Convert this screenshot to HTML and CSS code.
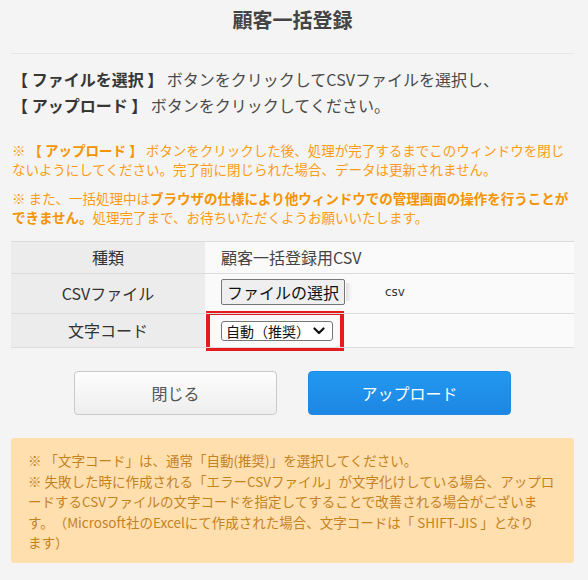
FILE: index.html
```html
<!DOCTYPE html>
<html lang="ja">
<head>
<meta charset="utf-8">
<title>顧客一括登録</title>
<link rel="stylesheet" href="styles.css">
</head>
<body>
<h1 class="title">顧客一括登録</h1>
<p class="lead"><b>【 ファイルを選択 】</b> ボタンをクリックしてCSVファイルを選択し、<br><b>【 アップロード 】</b> ボタンをクリックしてください。</p>
<div class="notes">
  <p class="note">※ <b>【 アップロード 】</b> ボタンをクリックした後、処理が完了するまでこのウィンドウを閉じないようにしてください。完了前に閉じられた場合、データは更新されません。</p>
  <p class="note">※ また、一括処理中は<b>ブラウザの仕様により他ウィンドウでの管理画面の操作を行うことができません。</b>処理完了まで、お待ちいただくようお願いいたします。</p>
</div>
<table class="form">
  <tr class="row-type">
    <th>種類</th>
    <td>顧客一括登録用CSV</td>
  </tr>
  <tr class="row-file">
    <th>CSVファイル</th>
    <td>
      <div class="file">
        <button class="file-btn" type="button">ファイルの選択</button>
        <span class="file-fade"></span>
        <span class="file-ext">csv</span>
      </div>
    </td>
  </tr>
  <tr class="row-code">
    <th>文字コード</th>
    <td class="code-cell">
      <div class="highlight">
        <div class="select-wrap">
          <select class="code-select">
            <option>自動（推奨）</option>
            <option>SHIFT-JIS</option>
            <option>UTF-8</option>
          </select>
          <svg class="chevron" width="12" height="8" viewBox="0 0 12 8" aria-hidden="true"><path d="M1.5 1.5 L6 6 L10.5 1.5" fill="none" stroke="#111" stroke-width="2.2" stroke-linecap="round" stroke-linejoin="round"/></svg>
        </div>
      </div>
    </td>
  </tr>
</table>
<div class="actions">
  <button class="btn btn-close" type="button">閉じる</button>
  <button class="btn btn-upload" type="button">アップロード</button>
</div>
<div class="info">
  ※ 「文字コード」は、通常「自動(推奨)」を選択してください。<br>
  ※ 失敗した時に作成される「エラーCSVファイル」が文字化けしている場合、アップロードするCSVファイルの文字コードを指定してすることで改善される場合がございます。（Microsoft社のExcelにて作成された場合、文字コードは「 SHIFT-JIS 」となり<br>ます）
</div>
</body>
</html>
```

FILE: styles.css
```css
html, body {
  background: #f4f4f4;
}
body {
  margin: 0;
  padding: 0 14px 20px 11px;
  font-family: "Noto Sans CJK JP", "Noto Sans", sans-serif;
  color: #444;
  text-spacing-trim: space-all;
}
.title {
  margin: 0;
  font-size: 20px;
  line-height: 40px;
  font-weight: 700;
  text-align: center;
  color: #444;
  padding-bottom: 13px;
  border-bottom: 1px solid #e6e6e6;
}
.lead {
  margin: 12px 0 0;
  padding-left: 1px;
  font-size: 16px;
  line-height: 26px;
  color: #4a4a4a;
}
.lead b {
  color: #363636;
}
.notes {
  margin-top: 23px;
  padding-left: 1px;
}
.note {
  margin: 0;
  font-size: 13.5px;
  line-height: 18.5px;
  color: #fb9c14;
}
.note + .note {
  margin-top: 11px;
}
.note b {
  color: #f59300;
}
.form {
  width: 100%;
  margin-top: 15px;
  border-collapse: collapse;
  font-size: 16px;
}
.form th,
.form td {
  border-top: 1px solid #dcdcdc;
  border-bottom: 1px solid #dcdcdc;
  line-height: 21px;
  padding: 5px 16px;
  vertical-align: middle;
}
.form th {
  width: 162px;
  background: #ececec;
  font-weight: 400;
  text-align: center;
  color: #333;
}
.form td {
  background: #fafafa;
  text-align: left;
  color: #444;
}
.row-file td {
  padding-top: 5px;
  padding-bottom: 8px;
}
.file {
  display: flex;
  align-items: center;
  height: 26px;
}
.file-btn {
  height: 26px;
  padding: 0 5px;
  font-family: inherit;
  font-size: 16px;
  line-height: 22px;
  color: #111;
  background: #efefef;
  border: 1px solid #767676;
  border-radius: 2px;
}
.file-fade {
  width: 6px;
  height: 18px;
  margin-left: 1px;
  background: linear-gradient(to right, #e2e2e2, rgba(240,240,240,0));
}
.file-ext {
  margin-left: 33px;
  font-family: "DejaVu Sans", "Liberation Sans", sans-serif;
  font-size: 12px;
  color: #333;
}
.form td.code-cell {
  padding: 0;
}
.highlight {
  width: fit-content;
  margin: -3px 0 -4px 1px;
  padding: 6px 7px 6px 11px;
  border: 4px solid #e51c1f;
}
.select-wrap {
  position: relative;
  width: 112px;
  height: 20px;
}
.code-select {
  display: block;
  width: 112px;
  height: 20px;
  padding: 0 20px 0 4px;
  -webkit-appearance: none;
  appearance: none;
  font-family: "Noto Sans CJK JP", sans-serif;
  font-size: 14px;
  line-height: 18px;
  color: #111;
  background: #fff;
  border: 1px solid #767676;
  border-radius: 3px;
}
.chevron {
  position: absolute;
  right: 8px;
  top: 6px;
  pointer-events: none;
}
.actions {
  display: flex;
  justify-content: center;
  gap: 31px;
  margin-top: 23px;
}
.btn {
  width: 203px;
  height: 44px;
  border-radius: 4px;
  font-family: inherit;
  font-size: 16px;
  cursor: pointer;
}
.btn-close {
  color: #555;
  background: linear-gradient(#fdfdfd, #eeeeee);
  border: 1px solid #c9c9c9;
}
.btn-upload {
  color: #fff;
  background: linear-gradient(#2298f1, #1d87e3);
  border: 1px solid #1d8ae6;
}
.info {
  margin-top: 23px;
  padding: 12px 16px 10px 17px;
  background: #ffdfae;
  border-radius: 3px;
  font-size: 13.5px;
  line-height: 20.5px;
  color: #c4821f;
}
```
